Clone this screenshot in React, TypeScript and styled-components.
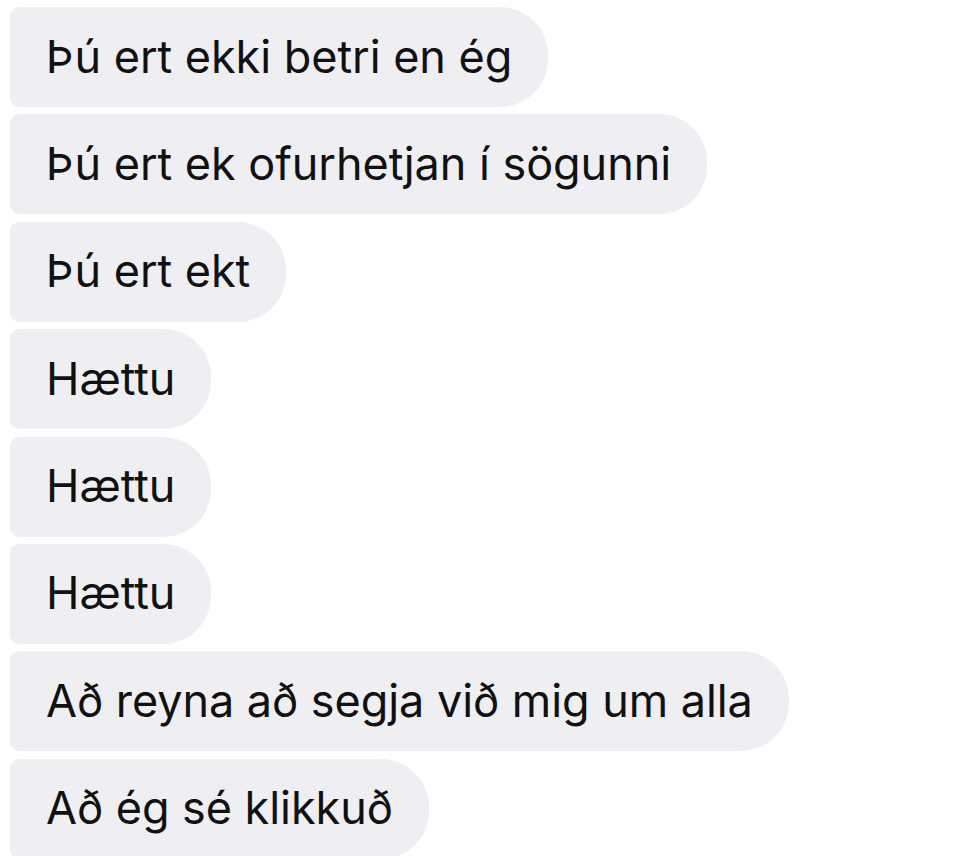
import React from 'react';
import styled, { createGlobalStyle } from 'styled-components';

const GlobalStyle = createGlobalStyle`
  html, body {
    margin: 0;
    padding: 0;
    background: #ffffff;
  }
  body {
    font-family: Inter, "Liberation Sans", Arial, sans-serif;
    -webkit-font-smoothing: antialiased;
  }
`;

const Thread = styled.div`
  display: flex;
  flex-direction: column;
  align-items: flex-start;
  gap: 7.4px;
  padding: 7px 0 0 10px;
  height: 856px;
  overflow: hidden;
  box-sizing: border-box;
`;

const Bubble = styled.div`
  box-sizing: border-box;
  height: 100px;
  display: flex;
  align-items: center;
  padding: 0 36px 1px 36px;
  background: #eeeef3;
  color: #111111;
  font-size: 45px;
  line-height: 56px;
  letter-spacing: -0.05px;
  white-space: nowrap;
  border-radius: 9px 48px 48px 9px;
  flex-shrink: 0;
`;

const messages = [
  'Þú ert ekki betri en ég',
  'Þú ert ek ofurhetjan í sögunni',
  'Þú ert ekt',
  'Hættu',
  'Hættu',
  'Hættu',
  'Að reyna að segja við mig um alla',
  'Að ég sé klikkuð',
];

const App = () => (
  <>
    <GlobalStyle />
    <Thread>
      {messages.map((text, i) => (
        <Bubble key={i}>{text}</Bubble>
      ))}
    </Thread>
  </>
);

export default App;
